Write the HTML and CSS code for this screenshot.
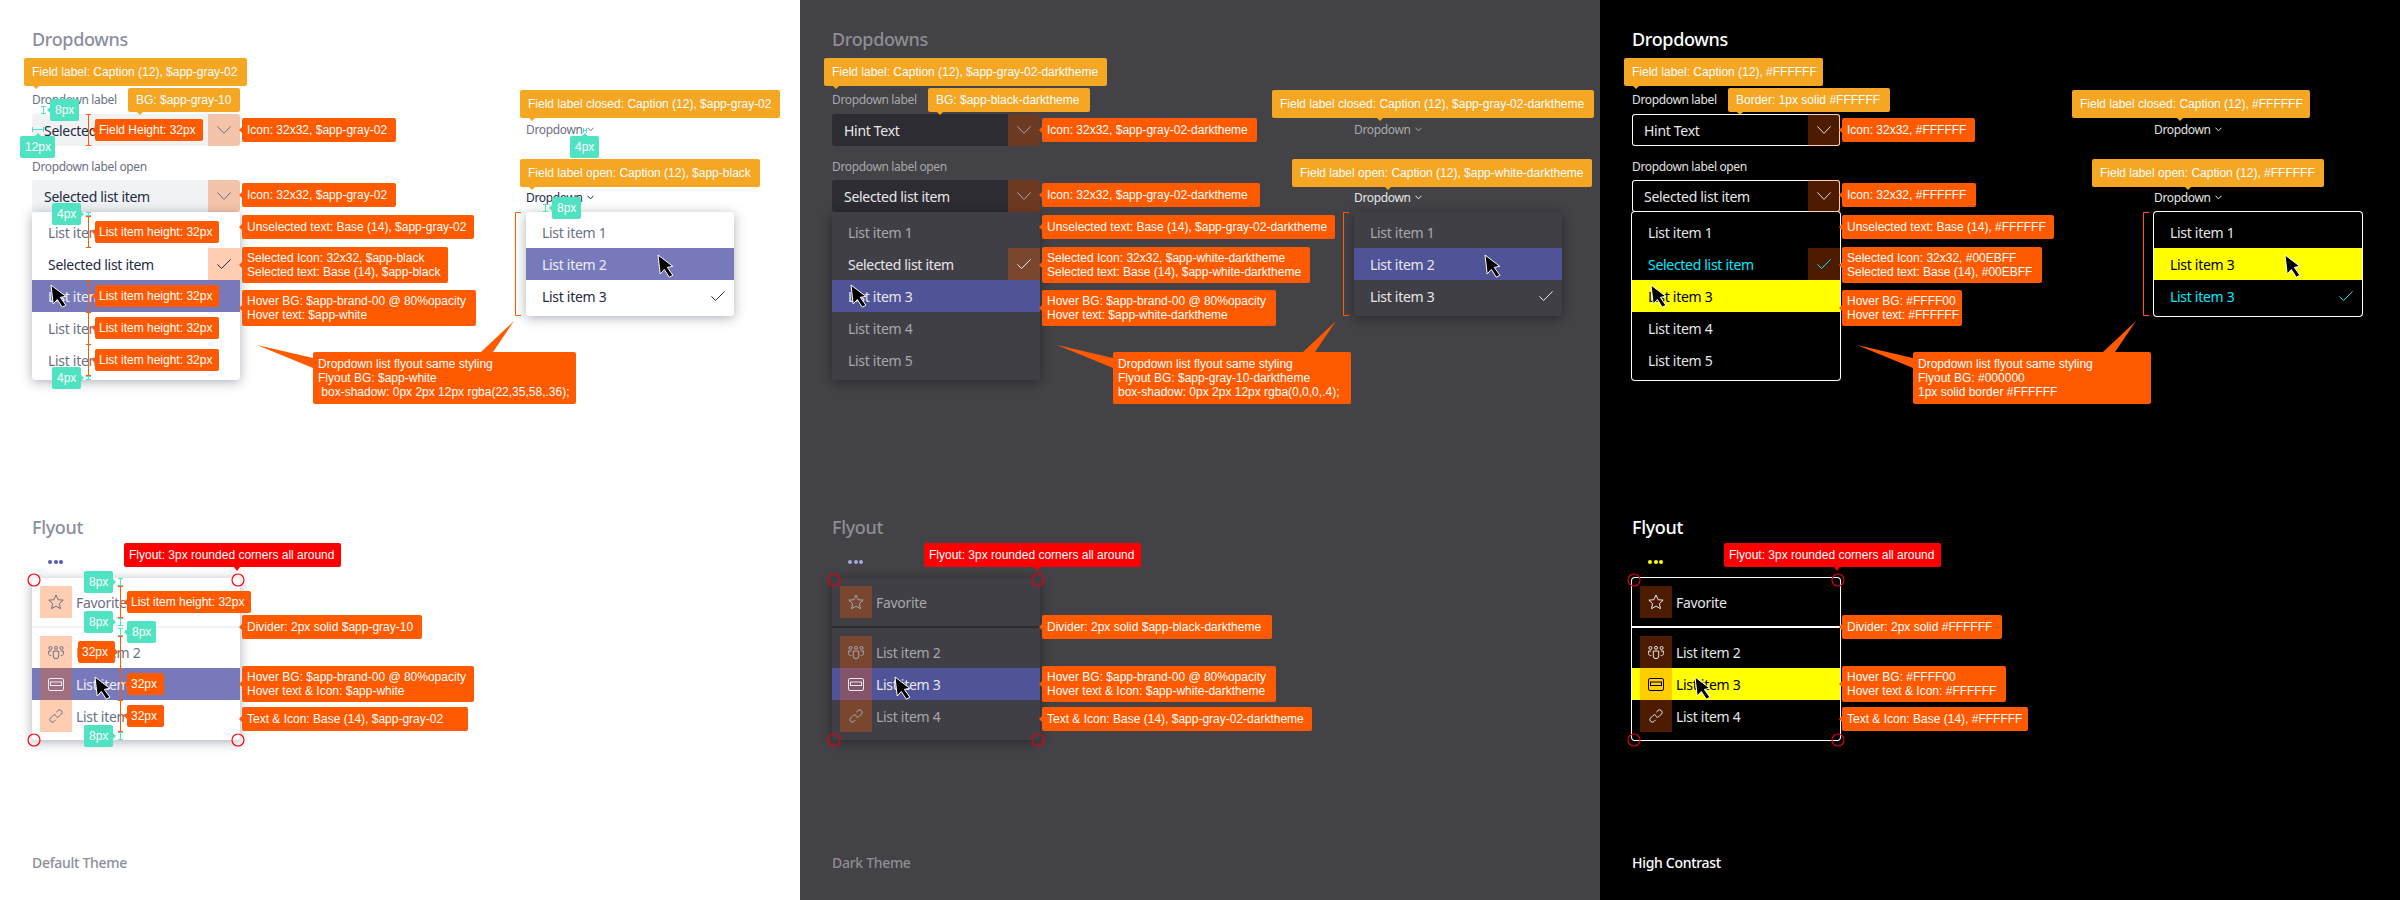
FILE: index.html
```html
<!DOCTYPE html>
<html>
<head>
    <title>Dropdowns and Flyout spec</title>
    <link rel="stylesheet" href="styles.css">
</head>
<body>
    <!-- Iconos compartidos -->
    <svg class="defs" width="0" height="0">
        <symbol id="chev" viewBox="0 0 14 8"><path d="M.4.4 7 7.4 13.6.4"/></symbol>
        <symbol id="chev-small" viewBox="0 0 7 5"><path d="M.5.7 3.5 3.9 6.5.7"/></symbol>
        <symbol id="check" viewBox="0 0 14 10"><path d="M.4 5.4 4.6 9.5 13.6.4"/></symbol>
        <symbol id="star" viewBox="0 0 16 16"><path d="M8 1 10.1 5.7 15.2 6.2 11.4 9.6 12.5 14.7 8 12.1 3.5 14.7 4.6 9.6.8 6.2 5.9 5.7Z"/></symbol>
        <symbol id="team" viewBox="0 0 16 13"><circle cx="2.4" cy="2" r="1.5"/><circle cx="8" cy="1.8" r="1.5"/><circle cx="13.6" cy="2" r="1.5"/><path d="M5.3 5h5.4v5a2.7 2.7 0 0 1-5.4 0ZM3.3 5H.6v2.6a2 2 0 0 0 2.7 1.9M12.7 5h2.7v2.6a2 2 0 0 1-2.7 1.9"/></symbol>
        <symbol id="card" viewBox="0 0 16 13"><rect x=".5" y=".5" width="15" height="12" rx="1.5"/><rect x="2.5" y="4" width="11" height="3.5"/></symbol>
        <symbol id="link" viewBox="0 0 16 16"><path d="M8.300 4.200 10 2.500a2.300 2.300 0 0 1 3.200 0l.3.300a2.300 2.300 0 0 1 0 3.200L11 8.500a2.300 2.300 0 0 1-3.200 0M7.700 11.800 6 13.500a2.300 2.300 0 0 1-3.200 0l-.3-.300a2.300 2.300 0 0 1 0-3.200L5 7.500a2.300 2.300 0 0 1 3.200 0"/></symbol>
        <symbol id="arrow" viewBox="0 0 17 24"><path d="M1 1 15.800 12.300 10.300 13.400 15.900 21.200 12.300 23.200 7.300 15.500 3.200 20Z"/></symbol>
    </svg>

    <!-- Default Theme -->
    <section class="theme light">
        <svg class="marks" width="800" height="900">
            <polygon class="tail" points="257,345 313,358 313,368"/>
            <polygon class="tail" points="514,321 481,352 493,352"/>
            <path class="bracket" d="M521 212.500h-5.500v103h5.500"/>
            <path class="beam" d="M88.500 114v32M86 114.500h5M86 145.500h5M88.500 216v32M86 216.500h5M86 247.500h5M88.500 280v96M86 280.500h5M86 312.500h5M86 344.500h5M86 375.500h5M120.500 586v32M118 586.500h5M118 617.500h5M120.500 636v96M118 636.500h5M118 668.500h5M118 700.500h5M118 731.500h5"/>
            <path class="beam-teal" d="M43.500 106v8M41 106.500h5M41 113.500h5M32 129.500h12M32.500 127v5M43.500 127v5M88.500 212v4M86 212.500h5M86 215.500h5M88.500 376v4M86 376.500h5M86 379.500h5M583 130.500h4M583.500 128v5M586.500 128v5M545.500 204v8M543 204.500h5M543 211.500h5M120.500 578v8M118 578.500h5M118 585.500h5M120.500 618v8M118 618.500h5M118 625.500h5M120.500 628v8M118 628.500h5M118 635.500h5M120.500 732v8M118 732.500h5M118 739.500h5"/>
            <g class="corners"><circle cx="34" cy="580" r="6"/><circle cx="238" cy="580" r="6"/><circle cx="34" cy="740" r="6"/><circle cx="238" cy="740" r="6"/></g>
        </svg>

        <h2>Dropdowns</h2>
        <div class="dropdowns">
            <div class="dd-col">
                <div class="dd-label">Dropdown label</div>
                <div class="field">Selected list item<span class="icon-box"><svg class="ic-chev"><use href="#chev"/></svg></span></div>
                <div class="dd-label dd-label-open">Dropdown label open</div>
                <div class="field">Selected list item<span class="icon-box"><svg class="ic-chev"><use href="#chev"/></svg></span></div>
                <div class="flyout list">
                    <div class="item">List item 1</div>
                    <div class="item selected">Selected list item<span class="icon-box"><svg class="ic-check"><use href="#check"/></svg></span></div>
                    <div class="item hover">List item 3</div>
                    <div class="item">List item 4</div>
                    <div class="item">List item 5</div>
                </div>
            </div>
            <div class="dd-col-small">
                <div class="small-closed">Dropdown<svg class="ic-small"><use href="#chev-small"/></svg></div>
                <div class="small-open">Dropdown<svg class="ic-small"><use href="#chev-small"/></svg></div>
                <div class="flyout list">
                    <div class="item">List item 1</div>
                    <div class="item hover">List item 2</div>
                    <div class="item selected">List item 3<span class="plain-box"><svg class="ic-check"><use href="#check"/></svg></span></div>
                </div>
            </div>
        </div>

        <h2 class="flyout-title">Flyout</h2>
        <div class="dots"><i></i><i></i><i></i></div>
        <div class="flyout menu">
            <div class="row"><span class="icon-box"><svg class="ic-star"><use href="#star"/></svg></span>Favorite</div>
            <div class="divider"></div>
            <div class="row"><span class="icon-box"><svg class="ic-team"><use href="#team"/></svg></span>List item 2</div>
            <div class="row hover"><span class="icon-box"><svg class="ic-card"><use href="#card"/></svg></span>List item 3</div>
            <div class="row"><span class="icon-box"><svg class="ic-link"><use href="#link"/></svg></span>List item 4</div>
        </div>
        <div class="theme-name">Default Theme</div>

        <div class="note yellow at-field-label">Field label: Caption (12), $app-gray-02</div>
        <div class="note yellow short at-bg">BG: $app-gray-10</div>
        <div class="note yellow at-closed">Field label closed: Caption (12), $app-gray-02</div>
        <div class="note yellow at-open">Field label open: Caption (12), $app-black</div>
        <div class="note orange left tight at-height">Field Height: 32px</div>
        <div class="note orange left at-icon1">Icon: 32x32, $app-gray-02</div>
        <div class="note orange left at-icon2">Icon: 32x32, $app-gray-02</div>
        <div class="note orange left tight at-li1">List item height: 32px</div>
        <div class="note orange left tight at-li2">List item height: 32px</div>
        <div class="note orange left tight at-li3">List item height: 32px</div>
        <div class="note orange left tight at-li4">List item height: 32px</div>
        <div class="note orange left at-unselected">Unselected text: Base (14), $app-gray-02</div>
        <div class="note orange left multi at-selected">Selected Icon: 32x32, $app-black<br>Selected text: Base (14), $app-black</div>
        <div class="note orange left multi at-hover">Hover BG: $app-brand-00 @ 80%opacity<br>Hover text: $app-white</div>
        <div class="note orange big at-big">Dropdown list flyout same styling<br>Flyout BG: $app-white<br>&nbsp;box-shadow: 0px 2px 12px rgba(22,35,58,.36);</div>

        <div class="note teal left at-t8a">8px</div>
        <div class="note teal top at-t12">12px</div>
        <div class="note teal right at-t4a">4px</div>
        <div class="note teal right at-t4b">4px</div>
        <div class="note teal top at-t4c">4px</div>
        <div class="note teal left at-t8b">8px</div>

        <div class="note red at-round">Flyout: 3px rounded corners all around</div>
        <div class="note teal right at-f8a">8px</div>
        <div class="note orange left tight at-fli">List item height: 32px</div>
        <div class="note teal right at-f8b">8px</div>
        <div class="note teal left at-f8c">8px</div>
        <div class="note orange right tight at-f32a">32px</div>
        <div class="note orange left tight at-f32b">32px</div>
        <div class="note orange left tight at-f32c">32px</div>
        <div class="note teal right at-f8d">8px</div>
        <div class="note orange left at-divider">Divider: 2px solid $app-gray-10</div>
        <div class="note orange left multi at-fhover">Hover BG: $app-brand-00 @ 80%opacity<br>Hover text &amp; Icon: $app-white</div>
        <div class="note orange left at-ftext">Text &amp; Icon: Base (14), $app-gray-02</div>

        <svg class="cursor cursor-1"><use href="#arrow"/></svg>
        <svg class="cursor cursor-2"><use href="#arrow"/></svg>
        <svg class="cursor cursor-3"><use href="#arrow"/></svg>
    </section>

    <!-- Dark Theme -->
    <section class="theme dark">
        <svg class="marks" width="800" height="900">
            <polygon class="tail" points="257,345 313,358 313,368"/>
            <polygon class="tail" points="536,321 503,352 515,352"/>
            <path class="bracket" d="M549 212.500h-5.500v103h5.500"/>
            <g class="corners"><circle cx="34" cy="580" r="6"/><circle cx="238" cy="580" r="6"/><circle cx="34" cy="740" r="6"/><circle cx="238" cy="740" r="6"/></g>
        </svg>

        <h2>Dropdowns</h2>
        <div class="dropdowns">
            <div class="dd-col">
                <div class="dd-label">Dropdown label</div>
                <div class="field">Hint Text<span class="icon-box"><svg class="ic-chev"><use href="#chev"/></svg></span></div>
                <div class="dd-label dd-label-open">Dropdown label open</div>
                <div class="field">Selected list item<span class="icon-box"><svg class="ic-chev"><use href="#chev"/></svg></span></div>
                <div class="flyout list">
                    <div class="item">List item 1</div>
                    <div class="item selected">Selected list item<span class="icon-box"><svg class="ic-check"><use href="#check"/></svg></span></div>
                    <div class="item hover">List item 3</div>
                    <div class="item">List item 4</div>
                    <div class="item">List item 5</div>
                </div>
            </div>
            <div class="dd-col-small">
                <div class="small-closed">Dropdown<svg class="ic-small"><use href="#chev-small"/></svg></div>
                <div class="small-open">Dropdown<svg class="ic-small"><use href="#chev-small"/></svg></div>
                <div class="flyout list">
                    <div class="item">List item 1</div>
                    <div class="item hover">List item 2</div>
                    <div class="item selected">List item 3<span class="plain-box"><svg class="ic-check"><use href="#check"/></svg></span></div>
                </div>
            </div>
        </div>

        <h2 class="flyout-title">Flyout</h2>
        <div class="dots"><i></i><i></i><i></i></div>
        <div class="flyout menu">
            <div class="row"><span class="icon-box"><svg class="ic-star"><use href="#star"/></svg></span>Favorite</div>
            <div class="divider"></div>
            <div class="row"><span class="icon-box"><svg class="ic-team"><use href="#team"/></svg></span>List item 2</div>
            <div class="row hover"><span class="icon-box"><svg class="ic-card"><use href="#card"/></svg></span>List item 3</div>
            <div class="row"><span class="icon-box"><svg class="ic-link"><use href="#link"/></svg></span>List item 4</div>
        </div>
        <div class="theme-name">Dark Theme</div>

        <div class="note yellow at-field-label">Field label: Caption (12), $app-gray-02-darktheme</div>
        <div class="note yellow short at-bg">BG: $app-black-darktheme</div>
        <div class="note yellow at-closed">Field label closed: Caption (12), $app-gray-02-darktheme</div>
        <div class="note yellow at-open">Field label open: Caption (12), $app-white-darktheme</div>
        <div class="note orange left at-icon1">Icon: 32x32, $app-gray-02-darktheme</div>
        <div class="note orange left at-icon2">Icon: 32x32, $app-gray-02-darktheme</div>
        <div class="note orange left at-unselected">Unselected text: Base (14), $app-gray-02-darktheme</div>
        <div class="note orange left multi at-selected">Selected Icon: 32x32, $app-white-darktheme<br>Selected text: Base (14), $app-white-darktheme</div>
        <div class="note orange left multi at-hover">Hover BG: $app-brand-00 @ 80%opacity<br>Hover text: $app-white-darktheme</div>
        <div class="note orange big at-big">Dropdown list flyout same styling<br>Flyout BG: $app-gray-10-darktheme<br>box-shadow: 0px 2px 12px rgba(0,0,0,.4);</div>

        <div class="note red at-round">Flyout: 3px rounded corners all around</div>
        <div class="note orange left at-divider">Divider: 2px solid $app-black-darktheme</div>
        <div class="note orange left multi at-fhover">Hover BG: $app-brand-00 @ 80%opacity<br>Hover text &amp; Icon: $app-white-darktheme</div>
        <div class="note orange left at-ftext">Text &amp; Icon: Base (14), $app-gray-02-darktheme</div>

        <svg class="cursor cursor-1"><use href="#arrow"/></svg>
        <svg class="cursor cursor-2"><use href="#arrow"/></svg>
        <svg class="cursor cursor-3"><use href="#arrow"/></svg>
    </section>

    <!-- High Contrast -->
    <section class="theme hc">
        <svg class="marks" width="800" height="900">
            <polygon class="tail" points="257,345 313,358 313,368"/>
            <polygon class="tail" points="536,321 503,352 515,352"/>
            <path class="bracket" d="M549 212.500h-5.500v103h5.500"/>
            <g class="corners"><circle cx="34" cy="580" r="6"/><circle cx="238" cy="580" r="6"/><circle cx="34" cy="740" r="6"/><circle cx="238" cy="740" r="6"/></g>
        </svg>

        <h2>Dropdowns</h2>
        <div class="dropdowns">
            <div class="dd-col">
                <div class="dd-label">Dropdown label</div>
                <div class="field">Hint Text<span class="icon-box"><svg class="ic-chev"><use href="#chev"/></svg></span></div>
                <div class="dd-label dd-label-open">Dropdown label open</div>
                <div class="field">Selected list item<span class="icon-box"><svg class="ic-chev"><use href="#chev"/></svg></span></div>
                <div class="flyout list">
                    <div class="item">List item 1</div>
                    <div class="item selected">Selected list item<span class="icon-box"><svg class="ic-check"><use href="#check"/></svg></span></div>
                    <div class="item hover">List item 3</div>
                    <div class="item">List item 4</div>
                    <div class="item">List item 5</div>
                </div>
            </div>
            <div class="dd-col-small">
                <div class="small-closed">Dropdown<svg class="ic-small"><use href="#chev-small"/></svg></div>
                <div class="small-open">Dropdown<svg class="ic-small"><use href="#chev-small"/></svg></div>
                <div class="flyout list">
                    <div class="item">List item 1</div>
                    <div class="item hover">List item 3</div>
                    <div class="item selected">List item 3<span class="plain-box"><svg class="ic-check"><use href="#check"/></svg></span></div>
                </div>
            </div>
        </div>

        <h2 class="flyout-title">Flyout</h2>
        <div class="dots"><i></i><i></i><i></i></div>
        <div class="flyout menu">
            <div class="row"><span class="icon-box"><svg class="ic-star"><use href="#star"/></svg></span>Favorite</div>
            <div class="divider"></div>
            <div class="row"><span class="icon-box"><svg class="ic-team"><use href="#team"/></svg></span>List item 2</div>
            <div class="row hover"><span class="icon-box"><svg class="ic-card"><use href="#card"/></svg></span>List item 3</div>
            <div class="row"><span class="icon-box"><svg class="ic-link"><use href="#link"/></svg></span>List item 4</div>
        </div>
        <div class="theme-name">High Contrast</div>

        <div class="note yellow at-field-label">Field label: Caption (12), #FFFFFF</div>
        <div class="note yellow short at-bg">Border: 1px solid #FFFFFF</div>
        <div class="note yellow at-closed">Field label closed: Caption (12), #FFFFFF</div>
        <div class="note yellow at-open">Field label open: Caption (12), #FFFFFF</div>
        <div class="note orange left at-icon1">Icon: 32x32, #FFFFFF</div>
        <div class="note orange left at-icon2">Icon: 32x32, #FFFFFF</div>
        <div class="note orange left at-unselected">Unselected text: Base (14), #FFFFFF</div>
        <div class="note orange left multi at-selected">Selected Icon: 32x32, #00EBFF<br>Selected text: Base (14), #00EBFF</div>
        <div class="note orange left multi at-hover">Hover BG: #FFFF00<br>Hover text: #FFFFFF</div>
        <div class="note orange big at-big">Dropdown list flyout same styling<br>Flyout BG: #000000<br>1px solid border #FFFFFF</div>

        <div class="note red at-round">Flyout: 3px rounded corners all around</div>
        <div class="note orange left at-divider">Divider: 2px solid #FFFFFF</div>
        <div class="note orange left multi at-fhover">Hover BG: #FFFF00<br>Hover text &amp; Icon: #FFFFFF</div>
        <div class="note orange left at-ftext">Text &amp; Icon: Base (14), #FFFFFF</div>

        <svg class="cursor cursor-1"><use href="#arrow"/></svg>
        <svg class="cursor cursor-2"><use href="#arrow"/></svg>
        <svg class="cursor cursor-3"><use href="#arrow"/></svg>
    </section>
</body>
</html>
```

FILE: styles.css
```css
* {
    box-sizing: border-box;
}

body {
    margin: 0;
    display: flex;
    width: 2400px;
    height: 900px;
    overflow: hidden;
    font-family: "Noto Sans", sans-serif;
}

.defs {
    position: absolute;
}

/* Colores de cada tema */
.light {
    --bg: #fff;
    --head: #8b8e9e;
    --label: #6c7085;
    --text: #252a3f;
    --field: #f0f2f4;
    --fly: #fff;
    --item: #6c7085;
    --sel: #252a3f;
    --hover: #7779bb;
    --hover-text: #eeeef6;
    --divider: #f0f2f4;
    --dots: #5558af;
    --shadow: 0 2px 12px rgba(22, 35, 58, 0.36);
}

.dark {
    --bg: #434247;
    --head: #8e8e93;
    --label: #a8a8ab;
    --text: #e8e8ea;
    --field: #2d2c32;
    --fly: #403f45;
    --item: #a8a8ab;
    --sel: #e8e8ea;
    --hover: #505398;
    --hover-text: #e8e8ea;
    --divider: #2d2c32;
    --dots: #a6a7dc;
    --shadow: 0 2px 12px rgba(0, 0, 0, 0.4);
}

.hc {
    --bg: #000;
    --head: #fff;
    --label: #e0e0e0;
    --text: #e6e6e6;
    --field: #000;
    --fly: #000;
    --item: #e6e6e6;
    --sel: #00ebff;
    --hover: #ff0;
    --hover-text: #000;
    --divider: #fff;
    --dots: #ff0;
    --shadow: 0 0 0 1px #fff;
}

.theme {
    position: relative;
    display: flex;
    flex-direction: column;
    width: 800px;
    height: 900px;
    padding: 27px 32px;
    background-color: var(--bg);
    color: var(--text);
}

h2 {
    margin: 0;
    font-size: 18px;
    line-height: 24px;
    font-weight: 500;
    letter-spacing: -0.35px;
    color: var(--head);
}

.dropdowns {
    display: flex;
    margin-top: 41px;
    height: 288px;
}

.dd-col {
    width: 208px;
}

.dd-col-small {
    width: 208px;
    margin-left: 286px;
}

.dark .dd-col-small,
.hc .dd-col-small {
    margin-left: 314px;
}

.dd-label {
    font-size: 12px;
    line-height: 16px;
    letter-spacing: -0.35px;
    margin-bottom: 6px;
    color: var(--label);
}

.dd-label-open {
    margin-top: 13px;
    margin-bottom: 5px;
}

.field {
    display: flex;
    align-items: center;
    height: 32px;
    padding-left: 12px;
    font-size: 14px;
    letter-spacing: -0.3px;
    background-color: var(--field);
    border-radius: 3px;
    overflow: hidden;
}

.hc .field {
    box-shadow: inset 0 0 0 1px #fff;
}

.icon-box,
.plain-box {
    display: flex;
    align-items: center;
    justify-content: center;
    flex: none;
    width: 32px;
    height: 32px;
    color: var(--label);
}

.icon-box {
    background-color: rgba(255, 90, 0, 0.3);
}

.field .icon-box,
.item .icon-box,
.item .plain-box {
    margin-left: auto;
}

svg use {
    fill: none;
    stroke: currentColor;
}

.ic-chev {
    width: 14px;
    height: 8px;
}

.ic-check {
    width: 14px;
    height: 10px;
}

.ic-small {
    width: 7px;
    height: 5px;
    margin-left: 4px;
}

.ic-star {
    width: 16px;
    height: 16px;
}

.ic-team,
.ic-card {
    width: 16px;
    height: 13px;
}

.ic-link {
    width: 16px;
    height: 16px;
}

.small-closed,
.small-open {
    display: flex;
    align-items: center;
    height: 16px;
    font-size: 12px;
    letter-spacing: -0.35px;
    color: var(--label);
}

.small-closed {
    margin-top: 29px;
}

.small-open {
    margin-top: 52px;
    color: var(--text);
}

.flyout {
    background-color: var(--fly);
    border-radius: 3px;
    box-shadow: var(--shadow);
    font-size: 14px;
    letter-spacing: -0.3px;
    overflow: hidden;
}

.list {
    padding: 4px 0;
}

.dd-col-small .list {
    margin-top: 7px;
}

.item {
    display: flex;
    align-items: center;
    height: 32px;
    padding-left: 16px;
    color: var(--item);
}

.item.selected {
    color: var(--sel);
}

.item.selected .icon-box,
.item.selected .plain-box {
    color: var(--sel);
}

.item.hover,
.row.hover {
    background-color: var(--hover);
    color: var(--hover-text);
}

.flyout-title {
    margin-top: 135px;
}

.dots {
    display: flex;
    gap: 1.500px;
    margin: 21px 0 14px 16px;
    height: 4px;
}

.dots i {
    width: 4px;
    height: 4px;
    border-radius: 50%;
    background-color: var(--dots);
}

.menu {
    width: 208px;
    padding: 8px 0;
}

.row {
    display: flex;
    align-items: center;
    gap: 4px;
    height: 32px;
    padding-left: 8px;
    color: var(--item);
}

.row .icon-box {
    color: inherit;
}

.divider {
    height: 2px;
    margin: 8px 0;
    background-color: var(--divider);
}

.theme-name {
    margin-top: auto;
    font-size: 14px;
    line-height: 20px;
    font-weight: 500;
    letter-spacing: -0.3px;
    color: var(--head);
}

/* Marcas y anotaciones, van encima del componente */
.marks {
    position: absolute;
    left: 0;
    top: 0;
    z-index: 1;
}

.marks path,
.marks circle {
    fill: none;
}

.tail {
    fill: #ff5a00;
}

.bracket,
.beam {
    stroke: #ff5a00;
}

.beam-teal {
    stroke: #50e3c2;
}

.corners circle {
    stroke: #f01;
    stroke-width: 1.2;
}

.dark .corners circle,
.hc .corners circle {
    stroke: #e00010;
}

.cursor {
    position: absolute;
    z-index: 2;
    width: 17px;
    height: 24px;
}

.cursor use {
    fill: #000;
    stroke: #fff;
    stroke-width: 1;
}

.cursor-1 {
    left: 50px;
    top: 284px;
}

.cursor-2 {
    left: 94px;
    top: 676px;
}

.cursor-3 {
    left: 657px;
    top: 254px;
}

.dark .cursor-3,
.hc .cursor-3 {
    left: 684px;
}

.note {
    position: absolute;
    z-index: 1;
    display: flex;
    align-items: center;
    height: 24px;
    padding: 0 5px;
    border-radius: 2px;
    font-family: "Liberation Sans", sans-serif;
    font-size: 12px;
    line-height: 14px;
    color: #fff;
    white-space: nowrap;
}

.note::after {
    content: "";
    position: absolute;
    border: 3px solid transparent;
}

.yellow {
    height: 28px;
    padding: 0 8px;
    background-color: #f5a623;
}

.yellow::after {
    left: var(--ax, 9px);
    top: 100%;
    border-top: 3px solid #f5a623;
    border-bottom: 0;
}

.yellow.short {
    height: 24px;
}

.orange {
    background-color: #ff5a00;
}

.teal {
    height: 22px;
    background-color: #50e3c2;
}

.red {
    background-color: #f00;
}

.red::after {
    left: 110px;
    top: 100%;
    border-top: 4px solid #f00;
    border-bottom: 0;
}

.tight {
    height: 22px;
    padding: 0 4px;
}

.multi {
    height: 36px;
}

.big {
    height: 52px;
}

.left::after {
    right: 100%;
    top: calc(50% - 3px);
    border-right: 3px solid;
    border-left: 0;
}

.right::after {
    left: 100%;
    top: calc(50% - 3px);
    border-left: 3px solid;
    border-right: 0;
}

.top::after {
    bottom: 100%;
    left: calc(50% - 3px);
    border-bottom: 3px solid;
    border-top: 0;
}

.orange.left::after,
.orange.right::after {
    border-left-color: #ff5a00;
    border-right-color: #ff5a00;
}

.teal.left::after,
.teal.right::after {
    border-left-color: #50e3c2;
    border-right-color: #50e3c2;
}

.teal.top::after {
    border-bottom-color: #50e3c2;
}

/* Posicion de cada anotacion sobre el tema */
.at-field-label { left: 24px; top: 58px; width: 223px; }
.at-bg { left: 128px; top: 88px; width: 112px; }
.at-closed { left: 520px; top: 90px; width: 260px; }
.at-open { left: 520px; top: 159px; width: 240px; }
.at-height { left: 95px; top: 119px; width: 108px; }
.at-icon1 { left: 242px; top: 118px; width: 154px; }
.at-icon2 { left: 242px; top: 183px; width: 154px; }
.at-li1 { left: 95px; top: 221px; width: 124px; }
.at-li2 { left: 95px; top: 285px; width: 124px; }
.at-li3 { left: 95px; top: 317px; width: 124px; }
.at-li4 { left: 95px; top: 349px; width: 124px; }
.at-unselected { left: 242px; top: 215px; width: 232px; }
.at-selected { left: 242px; top: 247px; width: 206px; }
.at-hover { left: 242px; top: 290px; width: 234px; }
.at-big { left: 313px; top: 352px; width: 263px; }
.at-t8a { left: 50px; top: 99px; width: 29px; }
.at-t12 { left: 20px; top: 136px; width: 35px; }
.at-t4a { left: 52px; top: 203px; width: 29px; }
.at-t4b { left: 52px; top: 367px; width: 29px; }
.at-t4c { left: 570px; top: 136px; width: 29px; }
.at-t8b { left: 552px; top: 197px; width: 29px; }
.at-round { left: 124px; top: 543px; width: 217px; }
.at-f8a { left: 84px; top: 571px; width: 29px; }
.at-fli { left: 127px; top: 591px; width: 124px; }
.at-f8b { left: 84px; top: 611px; width: 29px; }
.at-f8c { left: 127px; top: 621px; width: 29px; }
.at-f32a { left: 78px; top: 641px; width: 37px; }
.at-f32b { left: 127px; top: 673px; width: 37px; }
.at-f32c { left: 127px; top: 705px; width: 37px; }
.at-f8d { left: 84px; top: 725px; width: 29px; }
.at-divider { left: 242px; top: 615px; width: 180px; }
.at-fhover { left: 242px; top: 666px; width: 232px; }
.at-ftext { left: 242px; top: 707px; width: 226px; }

.dark .at-field-label { width: 283px; }
.dark .at-bg { width: 162px; }
.dark .at-closed { left: 472px; width: 322px; --ax: 105px; }
.dark .at-open { left: 492px; width: 300px; --ax: 93px; }
.dark .at-icon1 { width: 215px; }
.dark .at-icon2 { width: 218px; }
.dark .at-unselected { width: 293px; }
.dark .at-selected { width: 268px; }
.dark .at-big { width: 238px; }
.dark .at-divider { width: 230px; }
.dark .at-fhover { width: 234px; }
.dark .at-ftext { width: 270px; }

.hc .at-field-label { width: 199px; }
.hc .at-bg { width: 162px; }
.hc .at-closed { left: 472px; width: 238px; --ax: 105px; }
.hc .at-open { left: 492px; width: 232px; --ax: 93px; }
.hc .at-icon1 { width: 133px; }
.hc .at-icon2 { width: 134px; }
.hc .at-unselected { width: 212px; }
.hc .at-selected { width: 200px; }
.hc .at-hover { width: 120px; }
.hc .at-big { width: 238px; }
.hc .at-divider { width: 160px; }
.hc .at-fhover { width: 164px; }
.hc .at-ftext { width: 186px; }
```
